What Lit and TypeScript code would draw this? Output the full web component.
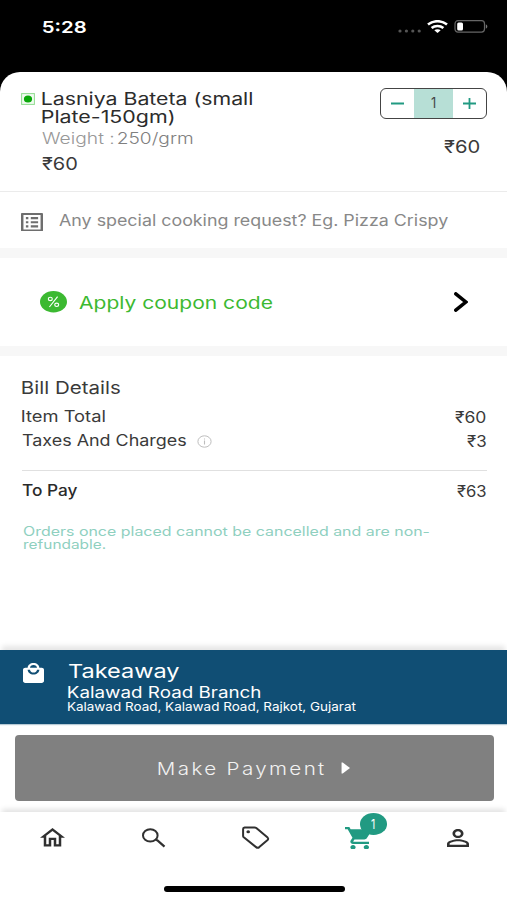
import { LitElement, html, css, svg } from "lit";
import { customElement, property, query } from "lit/decorators.js";

/* One line of text, stretched so that its ink fills a given width. */
@customElement("fit-text")
class FitText extends LitElement {
  @property({ type: Number }) w = 0;
  @property() text = "";
  @query(".ink") ink!: HTMLElement;

  static styles = css`
    :host { display: block; flex: none; }
    .ink { display: inline-block; white-space: pre; transform-origin: 0 50%; vertical-align: top; }
  `;

  render() {
    return html`<span class="ink">${this.text}</span>`;
  }

  updated() {
    const cs = getComputedStyle(this.ink);
    const ctx = document.createElement("canvas").getContext("2d") as any;
    ctx.font = `${cs.fontWeight} ${cs.fontSize} ${cs.fontFamily}`;
    const spacing = parseFloat(cs.letterSpacing) || 0;
    const m = ctx.measureText(this.text);
    const left = -m.actualBoundingBoxLeft;
    const inkWidth = m.actualBoundingBoxRight - left + spacing * (this.text.length - 1);
    const k = this.w / inkWidth;
    this.style.width = `${this.w}px`;
    this.ink.style.transform = `translateX(${-left * k}px) scaleX(${k})`;
  }
}

const line = (cls: string, text: string, w: number) =>
  html`<fit-text class=${cls} .text=${text} .w=${w}></fit-text>`;

const icon = (cls: string, w: number, h: number, box: string, body: unknown) =>
  html`<svg class=${cls} width=${w} height=${h} viewBox=${box} preserveAspectRatio="none">${body}</svg>`;

const HOME = svg`<path d="M12 5.69l5 4.5V18h-2v-6H9v6H7v-7.81l5-4.5M12 3L2 12h3v8h6v-6h2v6h6v-8h3L12 3z"/>`;
const CART = svg`<path d="M7 18c-1.1 0-1.99.9-1.99 2S5.9 22 7 22s2-.9 2-2-.9-2-2-2zM1 2v2h2l3.6 7.59-1.35 2.45c-.16.28-.25.61-.25.96 0 1.1.9 2 2 2h12v-2H7.42c-.14 0-.25-.11-.25-.25l.03-.12.9-1.63h7.45c.75 0 1.41-.41 1.75-1.03l3.58-6.49c.08-.14.12-.31.12-.48 0-.55-.45-1-1-1H5.21l-.94-2H1zm16 16c-1.1 0-1.99.9-1.99 2s.89 2 1.99 2 2-.9 2-2-.9-2-2-2z"/>`;
const PERSON = svg`<path d="M12 5.9c1.16 0 2.1.94 2.1 2.1s-.94 2.1-2.1 2.1S9.9 9.16 9.9 8s.94-2.1 2.1-2.1m0 9c2.97 0 6.1 1.46 6.1 2.1v1.1H5.9V17c0-.64 3.13-2.1 6.1-2.1M12 4C9.79 4 8 5.79 8 8s1.79 4 4 4 4-1.79 4-4-1.79-4-4-4zm0 9c-2.67 0-8 1.34-8 4v3h16v-3c0-2.66-5.33-4-8-4z"/>`;
const LIST = svg`<path d="M19 5v14H5V5h14m1.1-2H3.9c-.5 0-.9.4-.9.9v16.2c0 .4.4.9.9.9h16.2c.4 0 .9-.5.9-.9V3.9c0-.5-.5-.9-.9-.9zM11 7h6v2h-6V7zm0 4h6v2h-6v-2zm0 4h6v2h-6zM7 7h2v2H7zm0 4h2v2H7zm0 4h2v2H7z"/>`;
const BAG = svg`<path d="M19 6h-2c0-2.76-2.24-5-5-5S7 3.24 7 6H5c-1.1 0-1.99.9-1.99 2L3 20c0 1.1.9 2 2 2h14c1.1 0 2-.9 2-2V8c0-1.1-.9-2-2-2zm-7-3c1.66 0 3 1.34 3 3H9c0-1.66 1.34-3 3-3zm0 10c-2.76 0-5-2.24-5-5h2c0 1.66 1.34 3 3 3s3-1.34 3-3h2c0 2.76-2.24 5-5 5z"/>`;

@customElement("app-root")
class AppRoot extends LitElement {
  static styles = css`
    :host {
      display: flex; flex-direction: column; width: 507px; height: 900px; overflow: hidden;
      background: #000; color: #3a3a3a; font-family: Inter, "Noto Sans", sans-serif;
    }
    * { box-sizing: border-box; }
    svg { display: block; flex: none; }
    .row { display: flex; justify-content: space-between; align-items: flex-start; }

    .status { height: 72px; flex: none; display: flex; align-items: flex-start; padding: 20px 19px 0 43px; }
    .clock { color: #fff; font-size: 16.5px; font-weight: 600; line-height: 14px; margin-right: auto; }
    .dots { margin: 9px 6px 0 0; }
    .wifi { margin-right: 6px; }

    .sheet { flex: 1; display: flex; flex-direction: column; background: #fff; border-radius: 20px 20px 0 0; min-height: 0; }

    .item { height: 118.5px; padding: 19px 20px 0 21px; display: flex; }
    .veg { margin: 1.5px 7px 0 0; }
    .name { font-size: 17px; line-height: 17.5px; font-weight: 400; color: #2c2c2c; }
    .weight { display: flex; gap: 5px; margin-top: 3px; font-size: 15.5px; line-height: 20px; font-weight: 300; color: #989898; }
    .amount { color: #808080; }
    .price { font-size: 17px; line-height: 20px; margin-top: 5px; }
    .side { margin-left: auto; display: flex; flex-direction: column; align-items: flex-end; margin-top: -2.6px; }
    .stepper { width: 107px; height: 31px; border: 1.4px solid #444; border-radius: 6px; display: grid; grid-template-columns: 33px 39px 1fr; overflow: hidden; }
    .stepper > * { display: flex; align-items: center; justify-content: center; }
    .count { background: #b7dfd6; font-size: 14px; line-height: 28px; color: #444; padding-bottom: 1px; }
    .total { font-size: 17.5px; line-height: 20px; margin: 17.5px 8px 0 0; }

    .request { height: 57.5px; border-top: 1.5px solid #ebebeb; padding: 21px 21px 0; display: flex; gap: 16px; color: #888; }
    .request svg { fill: #6e6e6e; }
    .hint { font-size: 15.5px; line-height: 20px; margin-top: -2px; }
    .band { height: 10px; background: #f7f7f7; flex: none; }
    .coupon { height: 88px; padding: 33px 39px 0 40px; display: flex; align-items: flex-start; }
    .coupon-label { color: #3cb931; font-size: 17px; line-height: 20px; margin: 2px 0 0 12px; font-weight: 400; }
    .next { margin: 1px 0 0 auto; }

    .bill { padding: 21.5px 20px 0 21.5px; }
    .heading { font-size: 17.5px; line-height: 20px; margin-bottom: 9px; }
    .line { font-size: 15.5px; line-height: 20px; }
    .val { margin: 1px 1.2px 0 0; }
    .charges { margin-top: 3px; }
    .label { display: flex; gap: 11px; }
    .label svg { margin-top: 4px; }
    .rule { height: 1px; background: #e0e0e0; margin: 18px 0 10px; }
    .pay { font-weight: 450; color: #2a2a2a; }
    .note { color: #8fd0bf; font-size: 12.5px; line-height: 13.3px; margin: 23.5px 0 0 1px; }

    .footer { margin-top: auto; flex: none; background: #fff; }
    .branch {
      height: 74px; background: #104e74; color: #fff; padding: 13px 23px 0; display: flex; gap: 23.5px;
      box-shadow: 0 -6px 5px -2px rgba(0, 0, 0, .1), 0 1px 1px rgba(16, 78, 116, .3);
    }
    .mode { font-size: 19px; line-height: 20px; margin-top: -1px; }
    .place { font-size: 15.5px; line-height: 18px; margin-top: 2px; }
    .address { font-size: 12px; line-height: 12px; margin-top: -1.5px; }
    .make {
      margin: 11px 13.5px 11px 14.5px; height: 66px; border-radius: 4px; background: #808080; color: #f2f2f2;
      display: flex; align-items: center; padding-left: 143.5px; gap: 16.5px; font-size: 17.5px; font-weight: 300; letter-spacing: 2px;
    }
    .tabs {
      height: 88px; background: #fff; padding: 14px 37.5px 0 40px; display: flex; flex-direction: column;
      box-shadow: 0 -5px 5px -2px rgba(0, 0, 0, .11);
    }
    .tab-row { display: grid; grid-template-columns: 102px 100px 102px 103px 22px; height: 59.5px; fill: #303030; }
    .tab { position: relative; }
    .home { margin-top: 2.2px; }
    .person { margin-top: 2.8px; }
    .search { margin-top: 1.5px; }
    .cart { fill: #219a82; margin: .6px 0 0 .7px; }
    .badge {
      position: absolute; left: 15.5px; top: -13px; width: 27.5px; height: 22px; border-radius: 50%;
      background: #219a82; color: #fff; font-size: 13px; line-height: 22px; display: flex; justify-content: center;
    }
    .handle { width: 181px; height: 6px; border-radius: 3px; background: #000; margin-left: 124px; flex: none; }
  `;

  render() {
    return html`
      <div class="status">
        ${line("clock", "5:28", 43)}
        ${icon("dots", 23.5, 4, "0 0 23.5 4", svg`<g fill="#555"><circle cx="2" cy="2" r="1.6"/><circle cx="8.4" cy="2" r="1.6"/><circle cx="14.8" cy="2" r="1.6"/><circle cx="21.2" cy="2" r="1.6"/></g>`)}
        ${icon("wifi", 21, 13, "0 0 21 13", svg`<g fill="none" stroke="#fff" stroke-width="2.6"><path d="M1 4.6C6.3.1 14.7.1 20 4.6"/><path d="M4.6 8c3.3-2.7 8.5-2.7 11.8 0"/></g><path d="M7.3 10.3c1.8-1.5 4.6-1.5 6.4 0L10.5 13z" fill="#fff"/>`)}
        ${icon("battery", 34, 13, "0 0 34 13", svg`<rect x="1" y=".7" width="29.5" height="11.4" rx="3" fill="none" stroke="#666" stroke-width="1.2"/><rect x="3.2" y="2.4" width="5.8" height="8" rx="1.5" fill="#fff"/><path d="M31.8 4.2c2 .8 2 3.7 0 4.5z" fill="#777"/>`)}
      </div>

      <div class="sheet">
        <div class="item">
          ${icon("veg", 14, 12, "0 0 14 12", svg`<rect x=".6" y=".6" width="12.8" height="10.8" fill="#f1fbf1" stroke="#8fdc8f" stroke-width="1"/><ellipse cx="7" cy="6" rx="4.1" ry="3.6" fill="#0aa80a"/>`)}
          <div>
            ${line("name", "Lasniya Bateta (small", 210)}
            ${line("name", "Plate-150gm)", 132)}
            <div class="weight">${line("", "Weight :", 71)}${line("amount", "250/grm", 75)}</div>
            ${line("price", "₹60", 35)}
          </div>
          <div class="side">
            <div class="stepper">
              <div>${icon("", 13, 13, "0 0 13 13", svg`<path d="M0 6.5h13" stroke="#219a82" stroke-width="2"/>`)}</div>
              <div class="count">${line("", "1", 4.6)}</div>
              <div>${icon("", 13, 13, "0 0 13 13", svg`<path d="M0 6.5h13M6.5 1v11" stroke="#219a82" stroke-width="1.8"/>`)}</div>
            </div>
            ${line("total", "₹60", 35)}
          </div>
        </div>

        <div class="request">
          ${icon("", 22, 18.5, "3 3 18 18", LIST)}
          ${line("hint", "Any special cooking request? Eg. Pizza Crispy", 389.5)}
        </div>
        <div class="band"></div>
        <div class="coupon">
          ${icon("", 27, 21.5, "0 0 27 21.5", svg`<ellipse cx="13.5" cy="10.75" rx="13.5" ry="10.75" fill="#3cb931"/><g fill="none" stroke="#fff" stroke-width="1.1"><path d="M17.6 5.6L9.4 16"/><ellipse cx="10.3" cy="7.9" rx="2" ry="1.7"/><ellipse cx="16.7" cy="13.8" rx="2" ry="1.7"/></g>`)}
          ${line("coupon-label", "Apply coupon code", 194)}
          ${icon("next", 14, 20, "0 0 14 20", svg`<path d="M1.8 1.8L11.8 10l-10 8.2" fill="none" stroke="#000" stroke-width="3.5" stroke-linecap="round"/>`)}
        </div>
        <div class="band"></div>

        <div class="bill">
          ${line("heading", "Bill Details", 98.5)}
          <div class="row line">${line("", "Item Total", 83)}${line("val", "₹60", 30.5)}</div>
          <div class="row line charges">
            <div class="label">
              ${line("", "Taxes And Charges", 164.5)}
              ${icon("", 15, 13, "0 0 15 13", svg`<ellipse cx="7.5" cy="6.5" rx="6.6" ry="5.7" fill="none" stroke="#bdbdbd"/><path d="M7.5 3.4v1.2M7.5 5.4v4" stroke="#bdbdbd" stroke-width="1.1"/>`)}
            </div>
            ${line("val", "₹3", 19)}
          </div>
          <div class="rule"></div>
          <div class="row line">${line("pay", "To Pay", 55.5)}${line("val", "₹63", 29)}</div>
          <div class="note">
            ${line("", "Orders once placed cannot be cancelled and are non-", 406)}
            ${line("", "refundable.", 82.5)}
          </div>
        </div>

        <div class="footer">
          <div class="branch">
            ${icon("", 21, 20, "3 1 18 21", svg`<g fill="#fff">${BAG}</g>`)}
            <div>
              ${line("mode", "Takeaway", 112)}
              ${line("place", "Kalawad Road Branch", 192)}
              ${line("address", "Kalawad Road, Kalawad Road, Rajkot, Gujarat", 288)}
            </div>
          </div>
          <div class="make">
            ${line("", "Make Payment", 166)}
            ${icon("", 9, 12, "0 0 8 12", svg`<path d="M.5.5h1L8 6l-6.5 5.5h-1z" fill="#fff"/>`)}
          </div>
          <div class="tabs">
            <div class="tab-row">
              <div class="tab">${icon("home", 25, 18.5, "2 3 20 17", HOME)}</div>
              <div class="tab">${icon("search", 24, 20, "0 0 24 20", svg`<g fill="none" stroke="#303030" stroke-width="2"><ellipse cx="8.3" cy="7.4" rx="7.3" ry="6.2"/><path d="M14 11.8l1.5.6 7 6.2" stroke-width="2.3"/></g>`)}</div>
              <div class="tab">${icon("tag", 28, 24, "0 0 28 24", svg`<path d="M2.6 1.6L12.5 1.4q1 0 1.8.7L25.6 11.6q1.2 1.2 0 2.3l-8.3 7.2q-1.6 1.3-3.2 0L1.8 11.3q-.7-.6-.7-1.4V3q0-1.3 1.5-1.4z" fill="none" stroke="#303030" stroke-width="2"/><ellipse cx="6.2" cy="5.8" rx="1.8" ry="1.5"/>`)}</div>
              <div class="tab">
                ${icon("cart", 26.7, 22.5, "1 2 20 20", CART)}
                <div class="badge">${line("", "1", 4)}</div>
              </div>
              <div class="tab">${icon("person", 22, 18, "4 4 16 16", PERSON)}</div>
            </div>
            <div class="handle"></div>
          </div>
        </div>
      </div>
    `;
  }
}
